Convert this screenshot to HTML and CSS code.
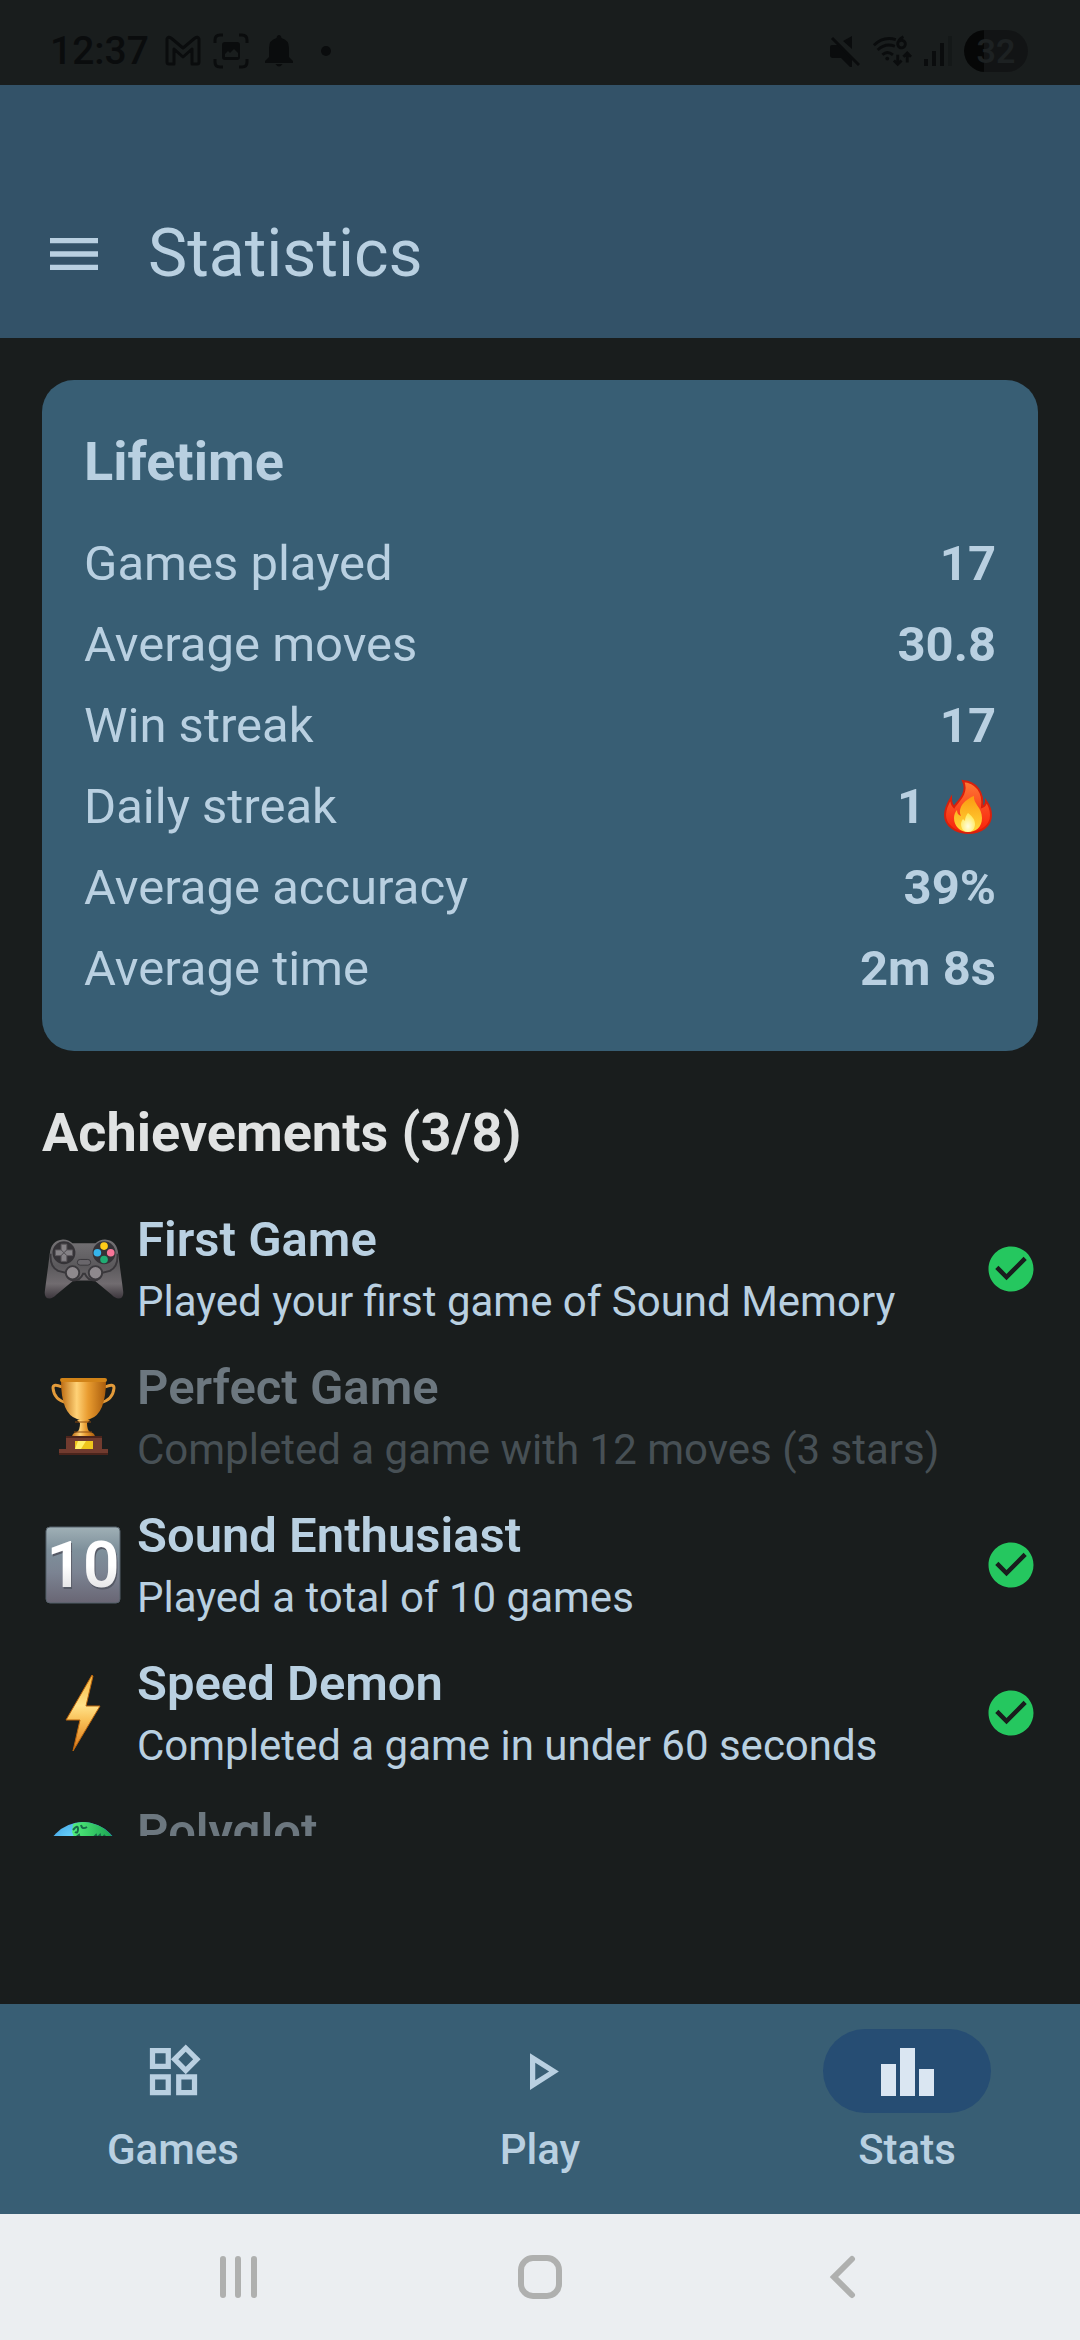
FILE: index.html
```html
<!DOCTYPE html>
<html lang="en">
<head>
    <meta charset="UTF-8">
    <title>Sound Memory - Statistics</title>
    <meta name="viewport" content="width=device-width, initial-scale=1">
    <link rel="stylesheet" href="styles.css">
</head>
<body>
    <div class="status-bar">
        <div class="status-left">
            <span class="clock">12:37</span>
            <svg width="36" height="36" viewBox="0 0 36 36" fill="none" stroke="currentColor" stroke-width="3" stroke-linejoin="round"><path d="M2 6v23q0 2 2 2h5V16l9 8 9-8v15h5q2 0 2-2V6q-1-3-4-1L18 15 6 5Q3 3 2 6z"/></svg>
            <svg width="36" height="36" viewBox="0 0 36 36"><path d="M2 10V7q0-5 5-5h3M26 2h3q5 0 5 5v3M34 26v3q0 5-5 5h-3M10 34H7q-5 0-5-5v-3" fill="none" stroke="currentColor" stroke-width="3"/><path fill="currentColor" fill-rule="evenodd" d="M12 9h12q3 0 3 3v12q0 3-3 3H12q-3 0-3-3V12q0-3 3-3zm0 12v3h13v-4l-4-4-4 4-2-2z"/></svg>
            <svg class="bell" width="28" height="36" viewBox="0 0 28 36" fill="currentColor"><path d="M14 2q2 0 2.500 3Q24 7 24 15v9l4 4v2H0v-2l4-4v-9Q4 7 11.500 5 12 2 14 2zM10.500 31h7q-3.500 5-7 0z"/></svg>
            <span class="dot"></span>
        </div>
        <div class="status-right">
            <svg width="30" height="36" viewBox="0 0 30 36" fill="currentColor"><path d="M22 3v13l-9-8zM2 12h7l13 12v10h-2l-9-9H2q-2-1-2-2v-9q0-2 2-2z"/><path d="M2 5l27 27" stroke="currentColor" stroke-width="3"/></svg>
            <svg width="40" height="36" viewBox="0 0 42 36" fill="none" stroke="currentColor" stroke-width="3"><path d="M2 12q10-10 23-6M6 17q8-8 18-4M11 22q5-5 11 0M33 3q-6 3-6 8a4 4 0 1 0 1-3M27 22v10M23 28l4 4 4-4M37 30V20M33 24l4-4 4 4"/><circle cx="16" cy="26" r="2" fill="currentColor" stroke="none"/></svg>
            <svg width="28" height="36" viewBox="0 0 28 36" fill="currentColor"><path d="M0 26h4v7H0zM8 18h4v15H8zM16 10h4v23h-4z"/><path d="M24 3h4v30h-4z" opacity=".3"/></svg>
            <span class="battery">32</span>
        </div>
    </div>

    <header class="app-bar">
        <button class="menu-button" type="button" aria-label="Menu">
            <svg width="64" height="64" viewBox="0 0 24 24" fill="currentColor"><path d="M3 18h18v-2H3v2zm0-5h18v-2H3v2zm0-7v2h18V6H3z"/></svg>
        </button>
        <h1>Statistics</h1>
    </header>

    <main>
        <section class="card">
            <h2>Lifetime</h2>
            <table class="stats">
                <tr><th scope="row">Games played</th><td>17</td></tr>
                <tr><th scope="row">Average moves</th><td>30.8</td></tr>
                <tr><th scope="row">Win streak</th><td>17</td></tr>
                <tr>
                    <th scope="row">Daily streak</th>
                    <td>
                        <span class="streak">1
                            <svg width="56" height="56" viewBox="0 0 56 56" role="img" aria-label="fire">
                                <defs>
                                    <linearGradient id="flame" x1="0" y1="0" x2="0" y2="1"><stop offset="0" stop-color="#ff7a35"/><stop offset=".5" stop-color="#fb4a20"/><stop offset="1" stop-color="#f8200a"/></linearGradient>
                                    <linearGradient id="flame-mid" x1="0" y1="0" x2="0" y2="1"><stop offset="0" stop-color="#fb9a10"/><stop offset="1" stop-color="#ffd83a"/></linearGradient>
                                    <radialGradient id="flame-core" cx=".5" cy=".7" r=".6"><stop offset="0" stop-color="#fffde0"/><stop offset="1" stop-color="#ffe95c"/></radialGradient>
                                </defs>
                                <path d="M23 2c13 1 21 11 19 26 3-1 4-3 4-6 3 4 5 9 5 14 0 11-10 18-23 18S5 46 5 36c0-6 3-12 6-17 0 5 1 7 3 9 2-4 15-13 9-26z" fill="url(#flame)" stroke="#d8200c" stroke-width="2"/>
                                <path d="M34 17c-1 8 8 11 8 22 0 9-6 14-14 14S14 47 14 39c0-3 1-6 3-8 0 3 1 5 4 6-4-9 5-17 13-20z" fill="url(#flame-mid)"/>
                                <path d="M28 34c5 4 7 7 7 11 0 5-3 8-7 8s-7-3-7-8c0-2 1-4 2-5l2 2c0-3 1-6 3-8z" fill="url(#flame-core)"/>
                            </svg>
                        </span>
                    </td>
                </tr>
                <tr><th scope="row">Average accuracy</th><td>39%</td></tr>
                <tr><th scope="row">Average time</th><td>2m 8s</td></tr>
            </table>
        </section>

        <h2 class="section-title">Achievements (3/8)</h2>
        <ul class="achievements">
            <li>
                <svg class="emoji" viewBox="-2 0 88 88">
                    <defs>
                        <linearGradient id="pad" x1="0" y1="0" x2="0" y2="1"><stop offset="0" stop-color="#747275"/><stop offset=".45" stop-color="#5b595c"/><stop offset=".75" stop-color="#716c70"/><stop offset="1" stop-color="#3c363c"/></linearGradient>
                    </defs>
                    <path d="M20 13q6 0 10 4h24q4-4 10-4 13 1 14 16l5 38q1 8-5 8-3 0-7-4L53 56H31L13 71q-4 4-7 4-6 0-5-8l5-38Q7 14 20 13z" fill="url(#pad)"/>
                    <path d="M7 28q-1 14 8 18l8 2q2 8 8 8 7 0 10-7h2q3 7 10 7 6 0 8-8l8-2q9-4 8-18" fill="none" stroke="#39373b" stroke-width="2"/>
                    <circle cx="21" cy="27" r="12" fill="#353337"/><circle cx="63" cy="27" r="12" fill="#353337"/>
                    <path d="M18 18h6v6l-3 3-3-3zM18 36h6v-6l-3-3-3 3zM12 24h6l3 3-3 3h-6zM30 24h-6l-3 3 3 3h6z" fill="#858286" stroke="#5a575b"/>
                    <circle cx="63" cy="20" r="4" fill="#ffcb18"/><circle cx="56" cy="27" r="4" fill="#35b5ec"/><circle cx="70" cy="27" r="4" fill="#f77598"/><circle cx="63" cy="34" r="4" fill="#20ac73"/>
                    <rect x="35" y="34" width="14" height="6" rx="3" fill="#69666b" stroke="#39373b"/>
                    <circle cx="30" cy="48" r="7" fill="#8e898d" stroke="#3b393d" stroke-width="2"/><circle cx="54" cy="48" r="7" fill="#8e898d" stroke="#3b393d" stroke-width="2"/>
                </svg>
                <div class="details">
                    <h3>First Game</h3>
                    <p>Played your first game of Sound Memory</p>
                </div>
                <svg class="check" viewBox="0 0 24 24" role="img" aria-label="Unlocked"><path d="M12 2C6.480 2 2 6.480 2 12s4.480 10 10 10 10-4.480 10-10S17.520 2 12 2zm-2 15l-5-5 1.410-1.410L10 14.170l7.590-7.590L19 8l-9 9z"/></svg>
            </li>
            <li class="locked">
                <svg class="emoji" viewBox="0 1 84 84">
                    <defs>
                        <linearGradient id="gold" x1="0" y1="0" x2="1" y2="0"><stop offset="0" stop-color="#bd6c12"/><stop offset=".35" stop-color="#ffd277"/><stop offset=".6" stop-color="#e99c30"/><stop offset="1" stop-color="#a95c0c"/></linearGradient>
                    </defs>
                    <path d="M20 13q-9-4-9 1 1 12 14 15M63 13q9-4 9 1-1 12-14 15" fill="none" stroke="#e39b3a" stroke-width="3"/>
                    <path d="M19 6h45q0 34-16 39-6 3-13 0Q19 40 19 6z" fill="url(#gold)"/>
                    <rect x="18" y="4" width="47" height="4" rx="2" fill="#d18318"/>
                    <path d="M35 46h13l-3 3q0 7 3 9 5 1 5 5H30q0-4 5-5 3-2 3-9z" fill="url(#gold)"/>
                    <path d="M33 48h16M32 58h18" stroke="#8e4c10"/>
                    <path d="M24 62h36v13h6v6H17v-6h7z" fill="#713b2f"/><path d="M24 63h36M17 80h49" stroke="#4b241c" stroke-width="2"/>
                    <rect x="33" y="67" width="18" height="8" fill="#eec51d"/><path d="M36 67h8l-5 8h-6z" fill="#fff06a"/>
                </svg>
                <div class="details">
                    <h3>Perfect Game</h3>
                    <p>Completed a game with 12 moves (3 stars)</p>
                </div>
            </li>
            <li>
                <svg class="emoji" viewBox="0 1 84 84">
                    <defs>
                        <linearGradient id="key" x1="0" y1="0" x2="0" y2="1"><stop offset="0" stop-color="#a0b0b6"/><stop offset=".3" stop-color="#7e909b"/><stop offset=".6" stop-color="#7b8392"/><stop offset="1" stop-color="#696674"/></linearGradient>
                        <linearGradient id="digits" x1="0" y1="0" x2="0" y2="1"><stop offset=".5" stop-color="#fff"/><stop offset="1" stop-color="#d5d5d8"/></linearGradient>
                    </defs>
                    <rect x="4" y="5" width="74" height="76" rx="4" fill="url(#key)" stroke="#55606a"/>
                    <text class="key-shadow" x="42" y="67" text-anchor="middle">10</text>
                    <text class="key-digits" x="41" y="65" text-anchor="middle" fill="url(#digits)">10</text>
                </svg>
                <div class="details">
                    <h3>Sound Enthusiast</h3>
                    <p>Played a total of 10 games</p>
                </div>
                <svg class="check" viewBox="0 0 24 24" role="img" aria-label="Unlocked"><path d="M12 2C6.480 2 2 6.480 2 12s4.480 10 10 10 10-4.480 10-10S17.520 2 12 2zm-2 15l-5-5 1.410-1.410L10 14.170l7.590-7.590L19 8l-9 9z"/></svg>
            </li>
            <li>
                <svg class="emoji" viewBox="0 1 84 84">
                    <defs>
                        <linearGradient id="bolt" x1="0" y1="0" x2="0" y2="1"><stop offset="0" stop-color="#f8b63c"/><stop offset=".4" stop-color="#ffe28a"/><stop offset=".6" stop-color="#f9c057"/><stop offset="1" stop-color="#dc7416"/></linearGradient>
                    </defs>
                    <path d="M50 5L24 50h14l-7 31 27-45H44l7-30z" fill="url(#bolt)" stroke="#b9640d" stroke-linejoin="round"/>
                </svg>
                <div class="details">
                    <h3>Speed Demon</h3>
                    <p>Completed a game in under 60 seconds</p>
                </div>
                <svg class="check" viewBox="0 0 24 24" role="img" aria-label="Unlocked"><path d="M12 2C6.480 2 2 6.480 2 12s4.480 10 10 10 10-4.480 10-10S17.520 2 12 2zm-2 15l-5-5 1.410-1.410L10 14.170l7.590-7.590L19 8l-9 9z"/></svg>
            </li>
            <li class="locked">
                <svg class="emoji" viewBox="0 2 84 84">
                    <defs>
                        <radialGradient id="sea" cx=".35" cy=".25" r=".6"><stop offset="0" stop-color="#6fdcff"/><stop offset="1" stop-color="#1c6fd0"/></radialGradient>
                        <linearGradient id="land" x1="0" y1="0" x2="1" y2="0"><stop offset="0" stop-color="#53f07c"/><stop offset="1" stop-color="#149a4c"/></linearGradient>
                    </defs>
                    <circle cx="41" cy="43" r="38" fill="url(#sea)"/>
                    <path d="M31 7q11-4 21 0 12 3 20 15l5 12-40 6-8-10 4-8-3-7z" fill="url(#land)"/>
                    <path d="M31 13q5-6 5-1t-3 3M39 8q1 5 6 2M33 21l4-3 1 4M51 21l3-3 1 3 3-3 1 4 4-4" fill="none" stroke="#176b4a" stroke-width="2"/>
                </svg>
                <div class="details">
                    <h3>Polyglot</h3>
                </div>
            </li>
        </ul>
    </main>

    <nav class="bottom-nav">
        <a href="#games">
            <span class="nav-icon"><svg width="63" height="63" viewBox="0 0 24 24" fill="currentColor"><path d="M16.660 4.520l2.830 2.830-2.830 2.830-2.830-2.830 2.830-2.830M9 5v4H5V5h4m10 10v4h-4v-4h4M9 15v4H5v-4h4m7.660-13.310L11 7.340 16.660 13l5.660-5.660-5.660-5.650zM11 3H3v8h8V3zm10 10h-8v8h8v-8zm-10 0H3v8h8v-8z"/></svg></span>
            Games
        </a>
        <a href="#play">
            <span class="nav-icon"><svg width="63" height="63" viewBox="0 0 24 24" fill="currentColor"><path d="M10 8.640L15.270 12 10 15.360V8.640M8 5v14l11-7L8 5z"/></svg></span>
            Play
        </a>
        <a href="#stats" class="active" aria-current="page">
            <span class="nav-icon"><svg width="63" height="63" viewBox="0 0 63 63" fill="currentColor"><path d="M5 24h15v32H5zM24 8h15v48H24zM43 29h15v27H43z"/></svg></span>
            Stats
        </a>
    </nav>

    <div class="system-nav">
        <button type="button" aria-label="Recent apps"><svg width="46" height="46" viewBox="0 0 46 46"><path d="M8 5v36M23 5v36M39 5v36"/></svg></button>
        <button type="button" aria-label="Home"><svg width="46" height="46" viewBox="0 0 46 46"><rect x="4" y="4" width="38" height="38" rx="12"/></svg></button>
        <button type="button" aria-label="Back"><svg width="46" height="46" viewBox="0 0 46 46"><path d="M33 5L15 23l18 18"/></svg></button>
    </div>
</body>
</html>
```
FILE: styles.css
```css
* { box-sizing: border-box; }
body { font-family: Roboto, sans-serif; margin: 0; height: 100vh; display: flex; flex-direction: column; background: #191d1d; color: #b9d0e1; }
h1, h2, h3, p, ul { margin: 0; padding: 0; }
svg { display: block; flex: none; }
button { background: none; border: none; padding: 0; color: inherit; cursor: pointer; }

.status-bar { display: flex; justify-content: space-between; align-items: center; height: 85px; padding: 17px 52px 0 50px; color: #0a0c0d; }
.status-left, .status-right { display: flex; align-items: center; gap: 12px; }
.clock { font-size: 39px; font-weight: 500; margin-right: 4px; }
.bell { margin-left: 4px; }
.dot { width: 10px; height: 10px; border-radius: 50%; background: currentColor; margin-left: 16px; }
.battery { width: 64px; height: 42px; border-radius: 21px; background: linear-gradient(to right, #060707 32%, #121415 32%); color: #1d2122; font-size: 34px; line-height: 42px; font-weight: 600; text-align: center; }

.app-bar { display: flex; align-items: center; gap: 42px; padding: 85px 42px 0; height: 253px; flex: none; background: #335268; }
h1 { font-size: 66px; font-weight: 400; line-height: 80px; }

main { flex: 1; min-height: 0; display: flex; flex-direction: column; padding: 42px 42px 168px; }
.card { background: #385e74; border-radius: 32px; padding: 42px; }
h2 { font-size: 54px; line-height: 80px; font-weight: 700; }
.stats { width: 100%; margin-top: 21px; border-collapse: collapse; font-size: 49px; line-height: 69px; }
.stats th, .stats td { padding: 6px 0; }
.stats th { text-align: left; font-weight: 400; }
.stats td { text-align: right; font-weight: 700; }
.streak { display: flex; justify-content: flex-end; align-items: center; gap: 15px; }

.section-title { margin-top: 42px; color: #e1e3e3; }
.achievements { flex: 1; min-height: 0; margin-top: 22px; overflow: hidden; list-style: none; }
.achievements li { display: flex; align-items: center; height: 148px; }
.emoji { width: 84px; height: 84px; margin-right: 11px; }
.details { flex: 1; min-height: 124px; }
.details h3 { font-size: 49px; line-height: 66px; font-weight: 600; }
.details p { font-size: 42px; line-height: 58px; }
.check { width: 54px; height: 54px; fill: #25c75f; }
.locked h3 { color: #6c777f; }
.locked p { color: #475055; }
.key-digits, .key-shadow { font-family: "Liberation Sans Narrow", Roboto, sans-serif; font-size: 64px; font-weight: 600; }
.key-shadow { fill: #565a66; }

.bottom-nav { display: grid; grid-template-columns: repeat(3, 1fr); gap: 21px; padding: 25px 0 35px; background: #385e74; }
.bottom-nav a { display: flex; flex-direction: column; align-items: center; gap: 8px; color: inherit; text-decoration: none; font-size: 42px; line-height: 58px; font-weight: 500; }
.nav-icon { display: flex; align-items: center; justify-content: center; width: 168px; height: 84px; border-radius: 42px; }
.active .nav-icon { background: #264d73; color: #dae6f2; }

.system-nav { display: grid; grid-template-columns: repeat(3, 1fr); padding: 0 87px; height: 126px; flex: none; background: #ebeef1; }
.system-nav button { display: flex; align-items: center; justify-content: center; }
.system-nav svg { fill: none; stroke: #afb0af; stroke-width: 6; stroke-linecap: round; }
```
